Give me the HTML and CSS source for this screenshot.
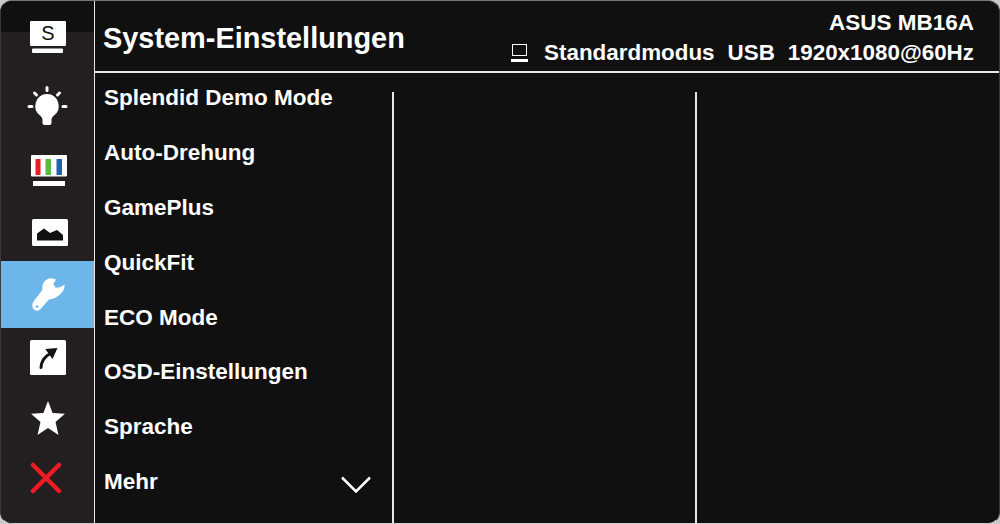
FILE: index.html
```html
<!DOCTYPE html>
<html lang="de">
<head>
<meta charset="utf-8">
<title>System-Einstellungen</title>
<link rel="stylesheet" href="styles.css">
</head>
<body>
<div class="osd">
  <nav class="side">
    <div class="tab t1"><svg width="36" height="32" viewBox="0 0 36 32"><path d="M0 1a1 1 0 0 1 1-1h34a1 1 0 0 1 1 1v23a1 1 0 0 1-1 1H1a1 1 0 0 1-1-1z" fill="#fff"/><rect x="2" y="27.500" width="31" height="4.500" rx="1" fill="#fff"/><text x="18" y="19" text-anchor="middle" class="s">S</text></svg></div>
    <div class="tab t2"><svg width="42" height="42" viewBox="0 0 42 42"><g stroke="#fff" stroke-width="3" stroke-linecap="round"><path d="M21 2.500v3M8.500 8l2 2M33.500 8l-2 2M3 21.500h3M37 21.500h3"/></g><path d="M21 9a12 12 0 0 0-7 21.500c1.500 1.100 2.500 2.600 2.500 4.500v3a2 2 0 0 0 2 2h5a2 2 0 0 0 2-2v-3c0-1.900 1-3.400 2.500-4.500A12 12 0 0 0 21 9z" fill="#fff"/></svg></div>
    <div class="tab t3"><svg width="36" height="32" viewBox="0 0 36 32"><rect x="0" y="0" width="36" height="21.500" rx="1" fill="#fff"/><rect x="4.500" y="4" width="5" height="16" fill="#ed1c24"/><rect x="14.500" y="4" width="5.500" height="16" fill="#5cb947"/><rect x="25.500" y="4" width="5.500" height="16" fill="#1f63b0"/><rect x="2" y="26" width="32" height="5" fill="#fff"/></svg></div>
    <div class="tab t4"><svg width="36" height="27" viewBox="0 0 36 27"><rect width="36" height="27" rx="1.500" fill="#fff"/><path d="M5 14.500L12 9.500 18 14 25 11 31 16V21.500H5z" fill="#111"/></svg></div>
    <div class="tab t5 on"><svg width="34" height="34" viewBox="0 0 34 34"><path d="M18.500.3C14 1 11 4 10.500 8 10.200 10 10.300 11 10.300 12L1.500 23.500C-.5 26 0 30 2.500 32 5 33.500 7.500 32.500 9 30.500L17 21.500C21 21.500 25 19 28.500 16 31.500 13 33 9.500 32.500 6.500L28 9.300 23.700 9.700 21.300 5.700 24 1.800C22 .7 20 .2 18.500.3z" fill="#fff"/><circle cx="5" cy="28.500" r="1.300" fill="#6db6ea"/></svg></div>
    <div class="tab t6"><svg width="36" height="35" viewBox="0 0 36 35"><rect width="36" height="35" rx="1.500" fill="#fff"/><path d="M15.300 9L27.500 8 22.500 19z" fill="#111"/><path d="M11 27.500C11.500 21 14 17 19.500 14" fill="none" stroke="#111" stroke-width="3" stroke-linecap="round"/></svg></div>
    <div class="tab t7"><svg width="34" height="34" viewBox="0 0 34 34"><path d="M17 0l4.600 11.900L34 12.800l-9.500 8.100L27.500 34 17 27 6.500 34l3-13.100L0 12.800l12.400-.9z" fill="#fff"/></svg></div>
    <div class="tab t8"><svg width="32" height="32" viewBox="0 0 32 32"><path d="M3 3l26 26M29 3L3 29" stroke="#ed1c24" stroke-width="4.500" stroke-linecap="round"/></svg></div>
  </nav>
  <div class="main">
    <header class="head">
      <h1 class="title">System-Einstellungen</h1>
      <div class="info">
        <div class="model">ASUS MB16A</div>
        <div class="status">
          <svg class="mon" width="17" height="18" viewBox="0 0 17 18"><rect x="1.500" y=".5" width="14" height="11" fill="none" stroke="#fff"/><rect x="0" y="15" width="17" height="3" fill="#fff"/></svg>
          <span class="mode">Standardmodus</span><span>USB</span><span>1920x1080@60Hz</span>
        </div>
      </div>
    </header>
    <div class="body">
      <ul class="menu">
        <li>Splendid Demo Mode</li>
        <li>Auto-Drehung</li>
        <li>GamePlus</li>
        <li>QuickFit</li>
        <li>ECO Mode</li>
        <li>OSD-Einstellungen</li>
        <li>Sprache</li>
        <li class="more">Mehr<svg class="chev" width="30" height="17" viewBox="0 0 30 17"><path d="M1 1.500l14 14 14-14" fill="none" stroke="#fff" stroke-width="2.500"/></svg></li>
      </ul>
      <div class="col"></div>
      <div class="col last"></div>
    </div>
  </div>
</div>
</body>
</html>
```
FILE: styles.css
```css
html, body { margin: 0; padding: 0; background: #c9c9c9; }
body { width: 1000px; height: 524px; overflow: hidden; font-family: "Liberation Sans", Arial, sans-serif; color: #fff; font-weight: 700; }
.osd { display: flex; box-sizing: border-box; width: 1000px; height: 524px; border: 1px solid #3a3a3a; border-top-color: #777; border-bottom-color: #d0d0d0; border-radius: 12px; overflow: hidden; background: #111011; }
.side { width: 93px; flex: none; border-right: 1px solid #e8e8e8; background: linear-gradient(#111011 31px, #231f20 31px); display: flex; flex-direction: column; }
.tab { display: flex; align-items: center; justify-content: center; flex: none; }
.t1 { height: 71px; }
.t2 { height: 67px; padding-right: 2px; }
.t3 { height: 64px; padding-left: 3px; }
.t4 { height: 58px; padding-left: 5px; }
.t5 { height: 67px; padding-left: 3px; }
.t6 { height: 58px; padding-left: 1px; }
.t7 { height: 63px; padding-left: 1px; }
.t8 { height: 58px; padding-right: 3px; }
.on { background: #6db6ea; }
.s { font: 400 20px "Liberation Sans", Arial, sans-serif; fill: #111; }
.main { flex: 1; display: flex; flex-direction: column; min-width: 0; }
.head { height: 70px; flex: none; border-bottom: 2px solid #e8e8e8; display: flex; justify-content: space-between; padding: 0 25px 0 8px; }
.title { margin: 0; font-size: 28.900px; line-height: 32px; padding-top: 21px; font-weight: 700; }
.info { display: flex; flex-direction: column; align-items: flex-end; padding-top: 10px; }
.model { font-size: 22.500px; line-height: 24px; }
.status { display: flex; align-items: center; font-size: 22.400px; line-height: 24px; margin-top: 6px; gap: 13px; }
.mon { margin-right: 3px; }
.body { flex: 1; display: flex; padding: 19px 0 9px; }
.menu { list-style: none; margin: 0; padding: 0 21px 0 9px; width: 267px; flex: none; font-size: 22.500px; }
.menu li { height: 54.900px; line-height: 12px; display: flex; justify-content: space-between; align-items: flex-start; }
.chev { margin-top: 0; }
.col { width: 303px; flex: none; border-left: 2px solid #e8e8e8; box-sizing: border-box; }
.last { flex: 1; }
```
